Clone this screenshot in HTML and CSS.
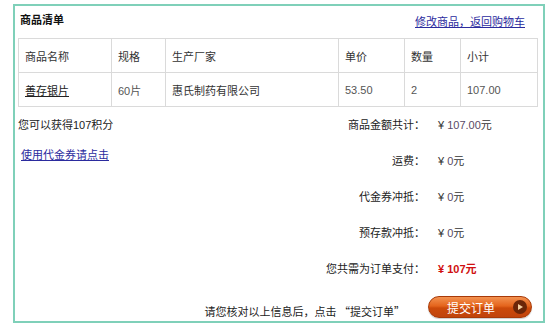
FILE: index.html
```html
<!DOCTYPE html>
<html lang="zh-CN">
<head>
  <meta charset="UTF-8">
  <title>确认订单</title>
  <link rel="stylesheet" href="styles.css">
</head>
<body>
  <div class="order-box">
    <div class="order-head">
      <span class="order-title">商品清单</span>
      <a href="#" class="back-link">修改商品，返回购物车</a>
    </div>

    <table class="goods">
      <colgroup>
        <col style="width:93px"><col style="width:54px"><col style="width:173px">
        <col style="width:66px"><col style="width:56px"><col style="width:77px">
      </colgroup>
      <tr>
        <th>商品名称</th><th>规格</th><th>生产厂家</th><th>单价</th><th>数量</th><th>小计</th>
      </tr>
      <tr>
        <td><a href="#" class="goods-link">善存银片</a></td>
        <td class="num">60片</td>
        <td>惠氏制药有限公司</td>
        <td class="num">53.50</td>
        <td class="num">2</td>
        <td class="num">107.00</td>
      </tr>
    </table>

    <div class="order-body">
      <div class="extra">
        <p class="points">您可以获得107积分</p>
        <a href="#" class="coupon-link">使用代金券请点击</a>
      </div>
      <div class="summary">
        <span class="label">商品金额共计：</span><span class="value">¥ <i>107.00</i>元</span>
        <span class="label">运费：</span><span class="value">¥ <i>0</i>元</span>
        <span class="label">代金券冲抵：</span><span class="value">¥ <i>0</i>元</span>
        <span class="label">预存款冲抵：</span><span class="value">¥ <i>0</i>元</span>
        <span class="label">您共需为订单支付：</span><span class="value total">¥ 107元</span>
      </div>
    </div>

    <div class="order-foot">
      <span class="hint">请您核对以上信息后，点击 “提交订单”</span>
      <button class="submit-btn">提交订单<span class="arrow"></span></button>
    </div>
  </div>
</body>
</html>
```

FILE: styles.css
```css
body {
  margin: 0;
  background: #fff;
  font-family: "Liberation Sans", "Noto Sans CJK SC", sans-serif;
  font-size: 11px;
  color: #222;
}

.order-box {
  box-sizing: border-box;
  display: flex;
  flex-direction: column;
  width: 532px;
  height: 319px;
  margin: 4px 0 0 13px;
  padding: 0 6px 0 3px;
  border: 2px solid #7fd0b9;
}

.order-head {
  display: flex;
  justify-content: space-between;
  align-items: flex-start;
  height: 32px;
  padding: 7px 0 0 2px;
  box-sizing: border-box;
  line-height: 14px;
}

.order-title {
  font-weight: bold;
  color: #111;
}

.back-link {
  margin: 2px 12px 0 0;
  color: #2b2b9e;
}

.goods {
  table-layout: fixed;
  width: 519px;
  border-collapse: collapse;
}

.goods th,
.goods td {
  height: 33px;
  padding: 0 0 0 6px;
  border: 1px solid #dadada;
  text-align: left;
  font-weight: normal;
  color: #333;
}

.goods .num {
  color: #555;
}

.goods-link {
  color: #222;
}

.order-body {
  display: flex;
  justify-content: space-between;
}

.points {
  margin: 10px 0 0;
  line-height: 16px;
}

.coupon-link {
  display: block;
  margin: 14px 0 0 3px;
  line-height: 16px;
  color: #2b2b9e;
}

.summary {
  display: grid;
  grid-template-columns: auto 99px;
  column-gap: 13px;
  row-gap: 20px;
  padding-top: 10px;
  line-height: 16px;
}

.summary .label {
  text-align: right;
  color: #222;
}

.summary .value {
  color: #333;
}

.summary .value i {
  font-style: normal;
  color: #5a4a66;
}

.summary .total {
  color: #d01010;
  font-weight: bold;
}

.order-foot {
  display: flex;
  justify-content: flex-end;
  align-items: flex-end;
  gap: 23px;
  margin-top: auto;
  padding: 0 5px 3px 0;
}

.hint {
  font-family: "Noto Sans CJK SC", sans-serif;
  line-height: 14px;
  color: #222;
}

.submit-btn {
  display: flex;
  align-items: center;
  justify-content: flex-end;
  gap: 18px;
  width: 104px;
  height: 22px;
  padding: 0 4px 0 0;
  border: 1px solid #a83a08;
  border-radius: 11px;
  background: linear-gradient(#f39250 0%, #e4641c 45%, #cc4a0a 55%, #c0440c 100%);
  color: #fff;
  font-family: "Noto Sans CJK SC", sans-serif;
  font-size: 12px;
  font-weight: normal;
  box-shadow: 0 1px 1px rgba(0, 0, 0, 0.2);
}

.arrow {
  position: relative;
  width: 14px;
  height: 14px;
  border-radius: 50%;
  background: #6b2608;
}

.arrow::after {
  content: "";
  position: absolute;
  top: 4px;
  left: 5px;
  border-left: 5px solid #f4d0a0;
  border-top: 3px solid transparent;
  border-bottom: 3px solid transparent;
}
```
